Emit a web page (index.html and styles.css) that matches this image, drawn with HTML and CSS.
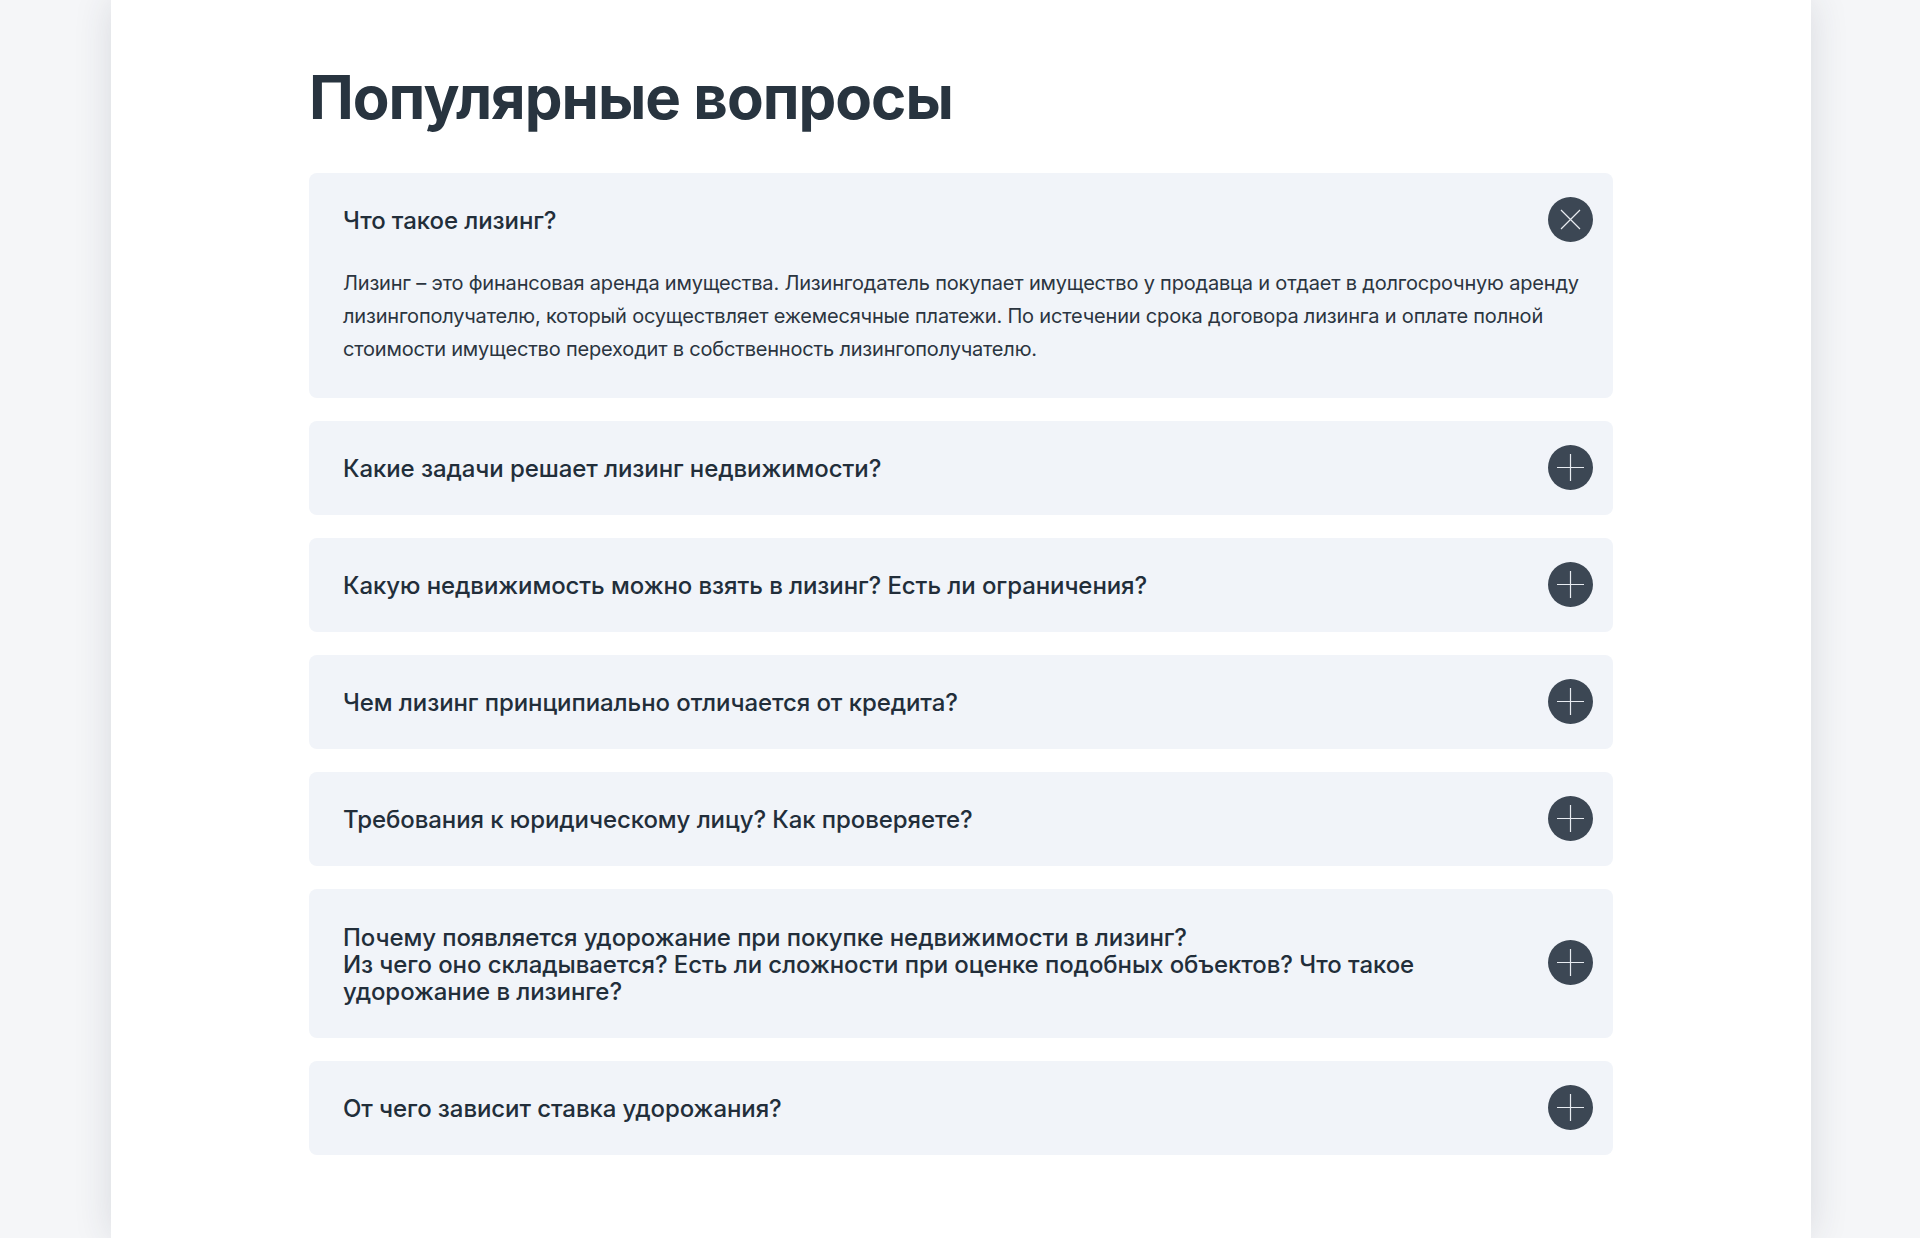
FILE: index.html
```html
<!DOCTYPE html>
<html lang="ru">
<head>
    <meta charset="UTF-8">
    <meta name="viewport" content="width=device-width, initial-scale=1.0">
    <title>Популярные вопросы</title>
    <link rel="stylesheet" href="styles.css">
</head>
<body>
    <main class="page">
        <h1 class="title">Популярные вопросы</h1>
        <div class="faq">
            <div class="faq-item">
                <div class="faq-head">
                    <span class="question">Что такое лизинг?</span>
                    <svg class="toggle toggle-open" viewBox="0 0 45 45"><circle cx="22.5" cy="22.5" r="22.5"/><path d="M13 13 L32 32 M32 13 L13 32"/></svg>
                </div>
                <p class="answer">Лизинг – это финансовая аренда имущества. Лизингодатель покупает имущество у продавца и отдает в долгосрочную аренду лизингополучателю, который осуществляет ежемесячные платежи. По истечении срока договора лизинга и оплате полной стоимости имущество переходит в собственность лизингополучателю.</p>
            </div>
            <div class="faq-item">
                <div class="faq-head">
                    <span class="question">Какие задачи решает лизинг недвижимости?</span>
                    <svg class="toggle" viewBox="0 0 45 45"><circle cx="22.5" cy="22.5" r="22.5"/><path d="M9 22.5 H36 M22.5 9 V36"/></svg>
                </div>
            </div>
            <div class="faq-item">
                <div class="faq-head">
                    <span class="question">Какую недвижимость можно взять в лизинг? Есть ли ограничения?</span>
                    <svg class="toggle" viewBox="0 0 45 45"><circle cx="22.5" cy="22.5" r="22.5"/><path d="M9 22.5 H36 M22.5 9 V36"/></svg>
                </div>
            </div>
            <div class="faq-item">
                <div class="faq-head">
                    <span class="question">Чем лизинг принципиально отличается от кредита?</span>
                    <svg class="toggle" viewBox="0 0 45 45"><circle cx="22.5" cy="22.5" r="22.5"/><path d="M9 22.5 H36 M22.5 9 V36"/></svg>
                </div>
            </div>
            <div class="faq-item">
                <div class="faq-head">
                    <span class="question">Требования к юридическому лицу? Как проверяете?</span>
                    <svg class="toggle" viewBox="0 0 45 45"><circle cx="22.5" cy="22.5" r="22.5"/><path d="M9 22.5 H36 M22.5 9 V36"/></svg>
                </div>
            </div>
            <div class="faq-item">
                <div class="faq-head">
                    <span class="question question-long">Почему появляется удорожание при покупке недвижимости в лизинг?<br>Из чего оно складывается? Есть ли сложности при оценке подобных объектов? Что такое удорожание в лизинге?</span>
                    <svg class="toggle" viewBox="0 0 45 45"><circle cx="22.5" cy="22.5" r="22.5"/><path d="M9 22.5 H36 M22.5 9 V36"/></svg>
                </div>
            </div>
            <div class="faq-item">
                <div class="faq-head">
                    <span class="question">От чего зависит ставка удорожания?</span>
                    <svg class="toggle" viewBox="0 0 45 45"><circle cx="22.5" cy="22.5" r="22.5"/><path d="M9 22.5 H36 M22.5 9 V36"/></svg>
                </div>
            </div>
        </div>
    </main>
</body>
</html>
```

FILE: styles.css
```css
body {
    font-family: Inter, Arial, sans-serif;
    margin: 0;
    padding: 0;
    background-color: #f5f6f8;
    color: #222e3a;
    overflow: hidden;
}
.page {
    width: 1700px;
    height: 1238px;
    box-sizing: border-box;
    margin: 0 0 0 111px;
    padding: 60px 198px 0;
    background-color: white;
    box-shadow: 0 0 36px rgba(40,50,70,0.14);
}
.title {
    margin: 0 0 39px;
    font-size: 60px;
    line-height: 74px;
    font-weight: 700;
    letter-spacing: -1px;
    color: #28343f;
}
.faq {
    display: flex;
    flex-direction: column;
    gap: 23px;
}
.faq-item {
    background-color: #f1f4f9;
    border-radius: 8px;
}
.faq-head {
    display: flex;
    align-items: center;
    justify-content: space-between;
    min-height: 94px;
    padding: 0 20px 0 34px;
    box-sizing: border-box;
}
.question {
    padding-top: 1px;
    font-size: 24px;
    line-height: 27px;
    font-weight: 500;
    letter-spacing: -0.08px;
}
.question-long {
    max-width: 1130px;
    padding: 35px 0 33px;
}
.toggle {
    width: 45px;
    height: 45px;
    margin-top: -2px;
    flex: none;
}
.toggle circle {
    fill: #3c4754;
}
.toggle path {
    stroke: #e8ecf1;
    stroke-width: 1.2;
    fill: none;
}
.answer {
    margin: 0;
    padding: 0 20px 32px 34px;
    font-size: 20px;
    line-height: 33px;
    letter-spacing: -0.19px;
    color: #2b3540;
}
```
